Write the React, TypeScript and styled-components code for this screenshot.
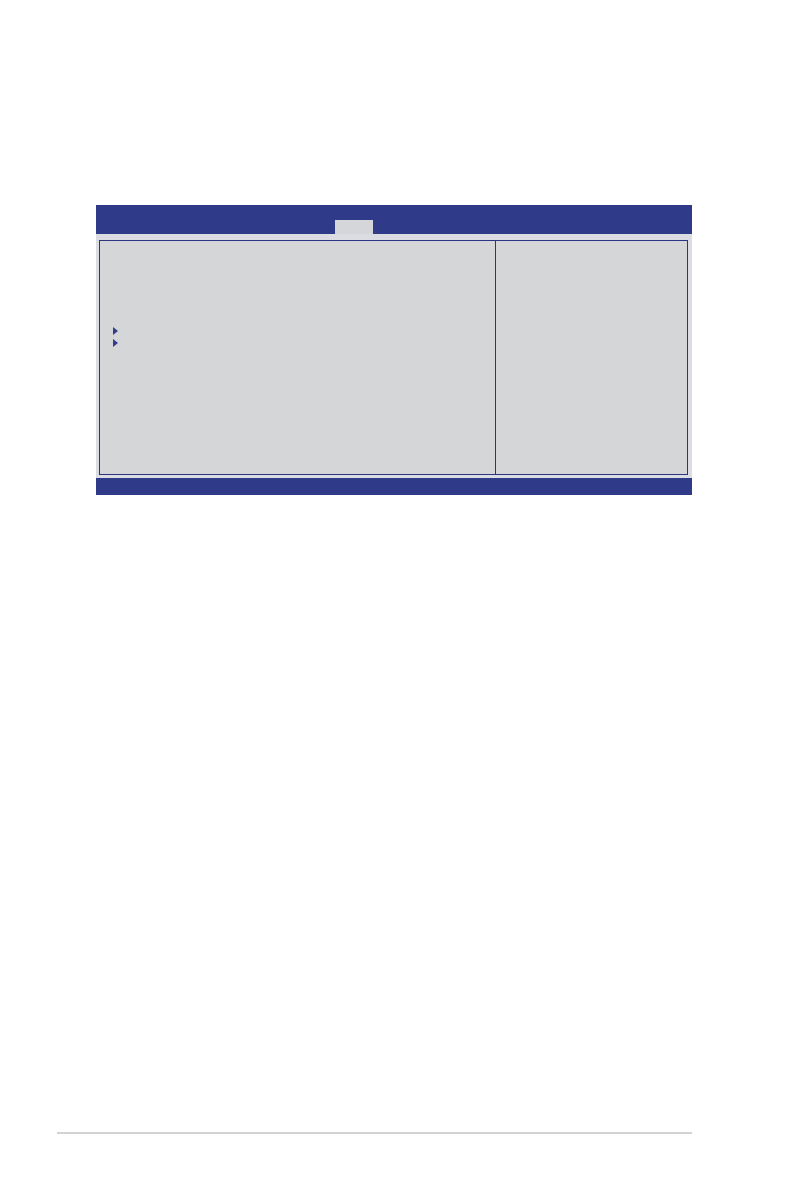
import React from "react";
import styled, { createGlobalStyle } from "styled-components";

const GlobalStyle = createGlobalStyle`
  html, body {
    margin: 0;
    padding: 0;
    background: #ffffff;
    font-family: "Liberation Sans", Arial, sans-serif;
  }
`;

const Page = styled.div`
  width: 794px;
  height: 1196px;
  background: #ffffff;
  display: flex;
  flex-direction: column;
`;

const Screen = styled.div`
  margin: 205px 0 0 96px;
  width: 596px;
  display: flex;
  flex-direction: column;
`;

const TopBar = styled.div`
  height: 29px;
  background: #2f3a89;
  display: flex;
  align-items: flex-end;
`;

const Tab = styled.div<{ $offset: number; $width: number }>`
  margin-left: ${(p) => p.$offset}px;
  width: ${(p) => p.$width}px;
  height: 14px;
  background: #d5d6d9;
`;

const Body = styled.div`
  background: #dcdde3;
  padding: 6px 3px 3px 3px;
`;

const Frame = styled.div`
  height: 233px;
  width: 587px;
  border: 1px solid #2e3580;
  background: #d5d6d8;
  display: grid;
  grid-template-columns: 396px 1fr;
`;

const MainColumn = styled.div`
  border-right: 1px solid #2e3580;
  padding: 84px 0 0 13px;
  display: flex;
  flex-direction: column;
`;

const HelpColumn = styled.div`
  background: #d5d6d8;
`;

const MenuRow = styled.div`
  height: 12px;
  display: flex;
  align-items: center;
`;

const Arrow = styled.span`
  width: 0;
  height: 0;
  border-top: 4px solid transparent;
  border-bottom: 4px solid transparent;
  border-left: 5px solid #333c8d;
`;

const BottomBar = styled.div`
  height: 17px;
  background: #2f3a89;
`;

const FooterRule = styled.div`
  margin: 637px 0 0 57px;
  width: 635px;
  height: 2px;
  background: #d2d2d2;
`;

const menuItems = ["submenu-a", "submenu-b"];

export default function App() {
  return (
    <>
      <GlobalStyle />
      <Page>
        <Screen>
          <TopBar>
            <Tab $offset={239} $width={38} />
          </TopBar>
          <Body>
            <Frame>
              <MainColumn>
                {menuItems.map((id) => (
                  <MenuRow key={id}>
                    <Arrow />
                  </MenuRow>
                ))}
              </MainColumn>
              <HelpColumn />
            </Frame>
          </Body>
          <BottomBar />
        </Screen>
        <FooterRule />
      </Page>
    </>
  );
}
